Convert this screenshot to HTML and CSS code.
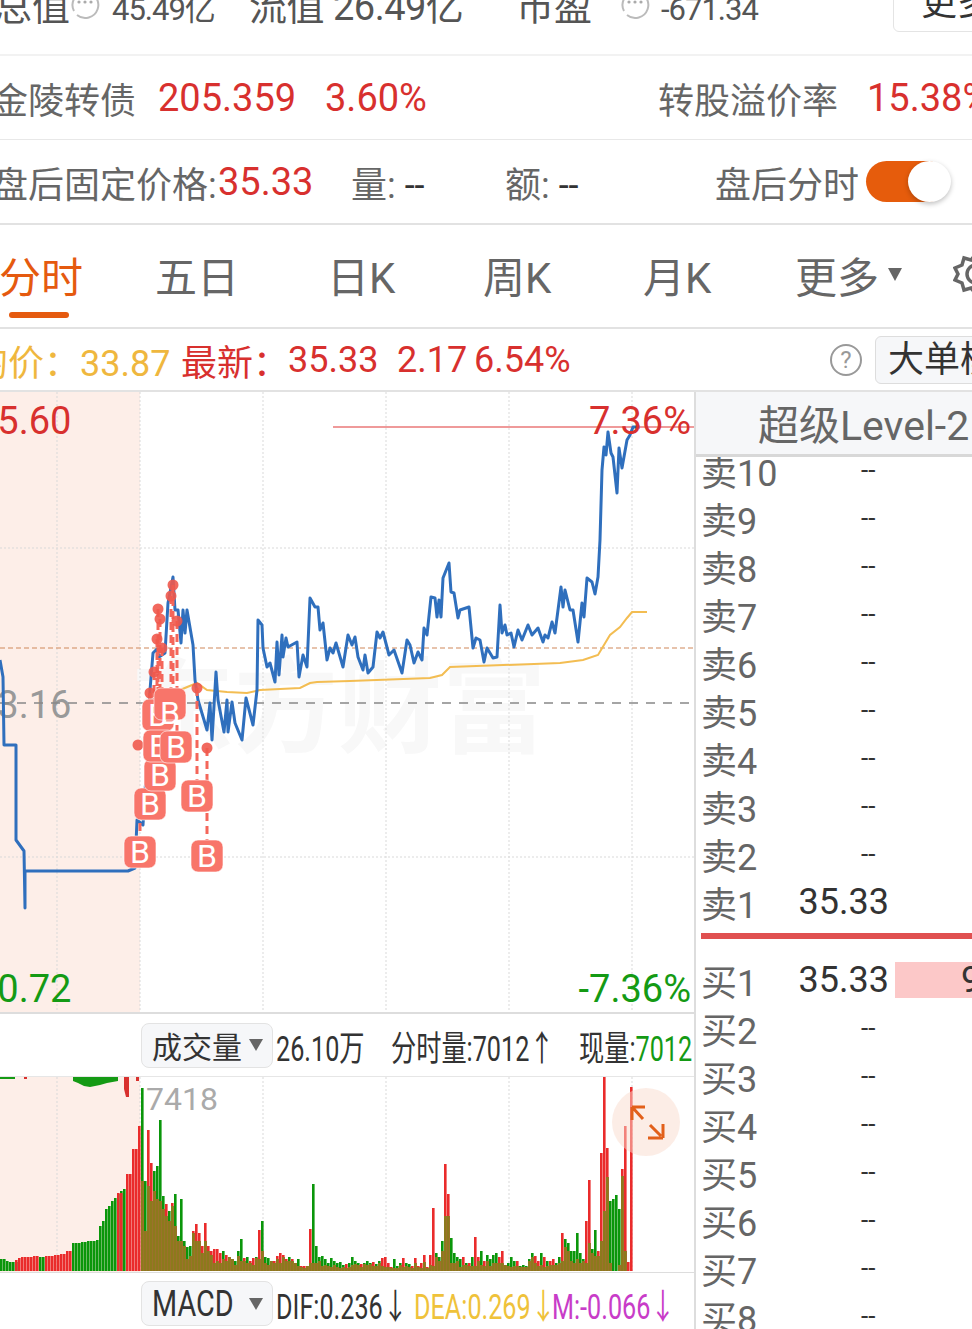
FILE: index.html
```html
<!DOCTYPE html>
<html lang="zh-CN">
  <head>
    <meta charset="UTF-8" />
    <meta name="viewport" content="width=device-width, initial-scale=1.0" />
    <title>金陵转债 分时</title>
    <link rel="stylesheet" href="styles.css">
  </head>
  <body>
    <div class="page">
      <div class="row top-row">
        <span>总值</span>
        <svg class="bubble" viewBox="0 0 30 30"><path d="M15 2a13 13 0 1 1-8 23" /><path d="M15 2A13 13 0 0 0 4 21" /><circle cx="9" cy="12" r="1.6" /><circle cx="15" cy="12" r="1.6" /><circle cx="21" cy="12" r="1.6" /></svg>
        <span class="small-val">45.49亿</span>
        <span class="big-val">流值 26.49亿</span>
        <span>市盈</span>
        <svg class="bubble" viewBox="0 0 30 30"><path d="M15 2a13 13 0 1 1-8 23" /><path d="M15 2A13 13 0 0 0 4 21" /><circle cx="9" cy="12" r="1.6" /><circle cx="15" cy="12" r="1.6" /><circle cx="21" cy="12" r="1.6" /></svg>
        <span class="small-val">-671.34</span>
        <div class="more-btn">更多</div>
      </div>

      <div class="row bond-row">
        <span>金陵转债</span>
        <span class="up num">205.359</span>
        <span class="up num">3.60%</span>
        <span>转股溢价率</span>
        <span class="up num">15.38%</span>
      </div>

      <div class="row after-row">
        <span>盘后固定价格:</span>
        <span class="up num">35.33</span>
        <span>量: <b class="dash">--</b></span>
        <span>额: <b class="dash">--</b></span>
        <span>盘后分时</span>
        <div class="toggle"><div class="knob"></div></div>
      </div>

      <div class="tabs">
        <span class="tab active">分时</span>
        <span class="tab">五日</span>
        <span class="tab">日K</span>
        <span class="tab">周K</span>
        <span class="tab">月K</span>
        <span class="tab">更多<i class="caret"></i></span>
        <svg class="gear" viewBox="0 0 46 46"><path d="M23 3l5 6 7-2 2 7 7 3-3 6 3 6-7 3-2 7-7-2-5 6-5-6-7 2-2-7-7-3 3-6-3-6 7-3 2-7 7 2z" /><circle cx="23" cy="23" r="9" /></svg>
      </div>

      <div class="row info-row">
        <span class="avg">均价：<b class="num">33.87</b></span>
        <span class="up">最新：</span>
        <span class="up num">35.33</span>
        <span class="up num">2.17</span>
        <span class="up num">6.54%</span>
        <span class="help">?</span>
        <div class="mode-btn">大单模式</div>
      </div>

      <div class="main">
        <div class="charts">
          <svg class="price-chart" viewBox="0 392 694 620">
            <rect class="pre-bg" x="0" y="392" width="140" height="620" />
            <text class="watermark" x="130" y="745">东方财富</text>
            <path class="grid" d="M57 392V1012M140 392V1012M263 392V1012M386 392V1012M509 392V1012M632 392V1012M0 548H694M0 857H694" />
            <path class="avg-line" d="M0 648H694" />
            <text class="axis up-fill" x="-24" y="434">35.60</text>
            <text class="axis grey-fill" x="-24" y="718">33.16</text>
            <text class="axis down-fill" x="-24" y="1002">30.72</text>
            <path class="mid-line" d="M0 703H694" />
            <path class="limit-line" d="M333 427H694" />
            <polyline class="yellow" points="180,690 197,683 207,690 227,692 247,693 260,690 300,688 310,683 317,682 350,681 430,678 442,675 450,667 560,663 583,660 598,655 610,635 620,627 627,618 632,612 647,612" />
            <polyline class="blue" points="0,660 3,677 4,745 16,745 16,840 24,851 25,908 25,871 32,871 128,871 135,868 137,820 143,825 145,790 148,760 150,690 153,653 157,649 159,657 165,653 168,603 173,577 175,610 178,610 181,643 183,610 185,633 187,610 193,645 195,680 198,700 207,730 210,703 212,740 216,672 218,700 224,732 227,700 228,732 232,702 235,723 242,740 246,698 253,725 257,690 258,620 262,625 263,648 267,667 270,663 275,682 277,642 279,675 282,635 283,657 286,638 288,647 297,642 299,677 303,655 307,667 310,598 315,607 318,607 320,630 323,623 327,660 330,648 333,653 336,643 343,667 348,635 352,645 355,637 358,657 363,670 365,655 368,673 373,667 377,632 380,638 383,632 389,655 394,650 402,673 407,640 410,645 414,663 418,652 422,660 424,628 427,635 431,597 435,598 437,617 439,600 441,617 443,578 449,563 451,592 454,593 458,618 460,610 469,607 473,648 476,638 480,640 484,662 487,648 493,658 497,657 500,605 502,633 505,625 507,635 511,633 514,647 518,630 522,640 528,625 532,635 538,628 543,642 545,635 548,638 552,622 555,633 561,587 563,607 565,590 570,610 573,610 578,642 582,603 584,617 587,578 592,582 595,594 598,577 600,540 602,470 604,447 606,455 608,432 611,453 613,457 617,493 619,448 622,468 627,440 630,435 633,427 640,427" />
            <path class="trade-stem" d="M173 585V700M171 596V700M158 609V715M160 619V715M177 621V747M157 639V747M162 648V775M154 672V804M150 693V804M197 688V796M207 748V856M140 810V852" />
            <g class="dots">
              <circle cx="173" cy="585" r="5.5" /><circle cx="171" cy="596" r="5.5" /><circle cx="158" cy="609" r="5.5" /><circle cx="160" cy="619" r="5.5" />
              <circle cx="177" cy="621" r="5.5" /><circle cx="157" cy="639" r="5.5" /><circle cx="162" cy="648" r="5.5" /><circle cx="154" cy="672" r="5.5" />
              <circle cx="150" cy="693" r="5.5" /><circle cx="197" cy="688" r="5.5" /><circle cx="207" cy="748" r="5.5" /><circle cx="138" cy="745" r="5.5" />
            </g>
            <g class="badge"><rect x="134" y="788" width="32" height="32" rx="7" /><text x="150" y="815">B</text></g>
            <g class="badge"><rect x="124" y="836" width="32" height="32" rx="7" /><text x="140" y="863">B</text></g>
            <g class="badge"><rect x="191" y="840" width="32" height="32" rx="7" /><text x="207" y="867">B</text></g>
            <g class="badge"><rect x="181" y="780" width="32" height="32" rx="7" /><text x="197" y="807">B</text></g>
            <g class="badge"><rect x="144" y="759" width="32" height="32" rx="7" /><text x="160" y="786">B</text></g>
            <g class="badge"><rect x="142" y="699" width="32" height="32" rx="7" /><text x="158" y="726">B</text></g>
            <g class="badge"><rect x="143" y="730" width="32" height="32" rx="7" /><text x="159" y="757">B</text></g>
            <g class="badge"><rect x="154" y="688" width="32" height="32" rx="7" /><text x="170" y="724">B</text></g>
            <g class="badge"><rect x="160" y="731" width="32" height="32" rx="7" /><text x="176" y="758">B</text></g>
            <text class="axis up-fill end" x="691" y="434">7.36%</text>
            <text class="axis down-fill end" x="691" y="1002">-7.36%</text>
          </svg>

          <div class="sub-bar">
            <div class="pick"><span>成交量</span><i></i></div>
            <span class="narrow w-total">26.10万</span>
            <span class="narrow w-fen">分时量:7012↑</span>
            <span class="narrow w-xian">现量:<b class="down">7012</b></span>
          </div>

          <div class="volume">
            <svg class="vol-chart" id="volChart" viewBox="0 0 694 195">
              <rect class="pre-bg" x="0" y="0" width="140" height="195" />
              <path class="grid" d="M57 0V195M140 0V195M263 0V195M386 0V195M509 0V195M632 0V195" />
              <path class="hang-green" d="M0 0H15V2H0zM73 0H118V4L107 6 100 8 90 10 84 9 78 6 73 4z" />
              <path class="hang-red" d="M24 0H27V2H24zM124 0H129V20H126L124 12zM136 0H139V4H136z" />
              <text class="peak" x="146" y="33">7418</text>
            </svg>
            <div class="expand">
              <svg viewBox="0 0 68 68"><path d="M20 19H33M20 19V32M21 20L31 31M51 50H36M51 50V36M49 48L38 37" /></svg>
            </div>
          </div>

          <div class="sub-bar macd-bar">
            <div class="pick"><span>MACD</span><i></i></div>
            <span class="narrow w-dif">DIF:0.236↓</span>
            <span class="narrow w-dea dea">DEA:0.269↓</span>
            <span class="narrow w-m macd-m">M:-0.066↓</span>
          </div>
        </div>

        <div class="book">
          <div class="book-head">超级Level-2</div>
          <div class="book-list">
            <div class="book-rows asks">
              <div class="level"><span>卖10</span><span class="price">--</span></div>
              <div class="level"><span>卖9</span><span class="price">--</span></div>
              <div class="level"><span>卖8</span><span class="price">--</span></div>
              <div class="level"><span>卖7</span><span class="price">--</span></div>
              <div class="level"><span>卖6</span><span class="price">--</span></div>
              <div class="level"><span>卖5</span><span class="price">--</span></div>
              <div class="level"><span>卖4</span><span class="price">--</span></div>
              <div class="level"><span>卖3</span><span class="price">--</span></div>
              <div class="level"><span>卖2</span><span class="price">--</span></div>
              <div class="level"><span>卖1</span><span class="price up">35.33</span></div>
            </div>
            <div class="book-sep"></div>
            <div class="book-rows">
              <div class="level"><span>买1</span><span class="price up">35.33</span><span class="qty">9</span></div>
              <div class="level"><span>买2</span><span class="price">--</span></div>
              <div class="level"><span>买3</span><span class="price">--</span></div>
              <div class="level"><span>买4</span><span class="price">--</span></div>
              <div class="level"><span>买5</span><span class="price">--</span></div>
              <div class="level"><span>买6</span><span class="price">--</span></div>
              <div class="level"><span>买7</span><span class="price">--</span></div>
              <div class="level"><span>买8</span><span class="price">--</span></div>
            </div>
          </div>
        </div>
      </div>
    </div>
    <script src="script.js"></script>
  </body>
</html>
```

FILE: styles.css
```css
* {
  box-sizing: border-box;
}

html,
body {
  margin: 0;
  background: #fff;
}

body {
  font-family: Roboto, "Noto Sans CJK SC", sans-serif;
  color: #666;
}

svg {
  display: block;
}

.page {
  width: 972px;
  height: 1329px;
  overflow: hidden;
}

.row {
  display: grid;
  align-items: center;
  white-space: nowrap;
  font-size: 36px;
  background: #fff;
}

.num {
  font-size: 38px;
  font-weight: 400;
}

.up {
  color: #d8302e;
}

.down {
  color: #149a14;
  font-weight: 400;
}

.top-row {
  position: relative;
  height: 56px;
  margin-left: -6px;
  grid-template-columns: 76px 42px 137px 267px 104px 41px 1fr;
  border-bottom: 2px solid #f2f2f2;
  align-items: start;
  color: #555;
}

.top-row > span {
  margin-top: -17px;
  line-height: 48px;
  font-size: 38px;
}

.top-row .small-val {
  margin-top: -9px;
  line-height: 38px;
  font-size: 31px;
  letter-spacing: -1px;
}

.top-row .big-val {
  letter-spacing: -0.5px;
}

.bubble {
  width: 30px;
  height: 30px;
  margin-top: -10px;
  fill: none;
  stroke: #bbb;
  stroke-width: 2;
}

.bubble circle {
  fill: #aaa;
  stroke: none;
}

.more-btn {
  position: absolute;
  left: 899px;
  top: -20px;
  width: 110px;
  height: 52px;
  padding-left: 27px;
  line-height: 44px;
  font-size: 36px;
  color: #333;
  background: #fff;
  border: 1px solid #e4e4e4;
  border-radius: 6px;
}

.bond-row {
  height: 84px;
  margin-left: -8px;
  grid-template-columns: 166px 167px 333px 209px 1fr;
  border-bottom: 1px solid #e8e8e8;
}

.after-row {
  height: 85px;
  margin-left: -8px;
  grid-template-columns: 226px 133px 154px 210px 151px 1fr;
  border-bottom: 2px solid #e2e2e2;
}

.dash {
  font-weight: 400;
  color: #333;
}

.toggle {
  position: relative;
  width: 82px;
  height: 41px;
  background: #e65c0c;
  border-radius: 21px;
}

.knob {
  position: absolute;
  right: -3px;
  top: 0;
  width: 43px;
  height: 41px;
  background: #fff;
  border-radius: 50%;
  box-shadow: 0 2px 5px rgba(0, 0, 0, 0.25);
}

.tabs {
  display: grid;
  grid-template-columns: 156px 172px 156px 160px 152px 158px 1fr;
  align-items: center;
  height: 104px;
  margin-left: -1px;
  padding-bottom: 4px;
  border-bottom: 2px solid #e2e2e2;
}

.tab {
  position: relative;
  font-size: 42px;
  white-space: nowrap;
}

.tab.active {
  color: #e55a0f;
}

.tab.active::after {
  content: "";
  position: absolute;
  left: 10px;
  bottom: -13px;
  width: 60px;
  height: 6px;
  background: #e55a0f;
  border-radius: 3px;
}

.caret {
  display: inline-block;
  margin-left: 9px;
  vertical-align: 12px;
  border-left: 7px solid transparent;
  border-right: 7px solid transparent;
  border-top: 13px solid #666;
}

.gear {
  width: 46px;
  height: 46px;
  fill: none;
  stroke: #666;
  stroke-width: 3.5;
}

.info-row {
  height: 63px;
  margin-left: -28px;
  grid-template-columns: 209px 107px 109px 77px 356px 45px 1fr;
  border-bottom: 2px solid #e2e2e2;
}

.avg {
  color: #efb73e;
}

.avg .num {
  font-size: 36px;
}

.info-row .num {
  font-size: 36px;
}

.help {
  width: 32px;
  height: 32px;
  margin-left: 0;
  border: 2px solid #999;
  border-radius: 50%;
  color: #999;
  font-size: 24px;
  line-height: 28px;
  text-align: center;
}

.mode-btn {
  width: 140px;
  height: 48px;
  padding-left: 12px;
  line-height: 46px;
  color: #333;
  background: #f6f7f9;
  border: 1px solid #ddd;
  border-radius: 6px;
}

.main {
  display: flex;
  height: 938px;
}

.charts {
  flex: 0 0 694px;
  width: 694px;
}

.price-chart {
  width: 694px;
  height: 620px;
}

.vol-chart {
  width: 694px;
  height: 195px;
}

.pre-bg {
  fill: #fdeee8;
}

.grid {
  fill: none;
  stroke: #d9d9d9;
  stroke-width: 1;
  stroke-dasharray: 2 2;
}

.avg-line {
  fill: none;
  stroke: #d0875a;
  stroke-width: 1.2;
  stroke-dasharray: 5 3;
}

.mid-line {
  fill: none;
  stroke: #888;
  stroke-width: 1.5;
  stroke-dasharray: 9 8;
}

.limit-line {
  fill: none;
  stroke: #ef9a9a;
  stroke-width: 2;
}

.yellow {
  fill: none;
  stroke: #f3bd52;
  stroke-width: 2;
}

.blue {
  fill: none;
  stroke: #2f6fbd;
  stroke-width: 3;
  stroke-linejoin: round;
}

.trade-stem {
  fill: none;
  stroke: #f4665a;
  stroke-width: 3;
  stroke-dasharray: 8 5;
}

.dots circle {
  fill: #f0594c;
  fill-opacity: 0.9;
}

.badge rect {
  fill: #f8756a;
  stroke: #fff;
  stroke-opacity: 0.6;
  stroke-width: 1;
}

.badge text {
  fill: #fff;
  font-size: 32px;
  text-anchor: middle;
}

.watermark {
  fill: #f8f8f8;
  font-size: 104px;
  font-weight: 700;
}

.axis {
  font-size: 38px;
}

.axis.end {
  text-anchor: end;
}

.up-fill {
  fill: #d8302e;
}

.down-fill {
  fill: #149a14;
}

.grey-fill {
  fill: #999;
}

.sub-bar {
  position: relative;
  display: flex;
  align-items: center;
  height: 65px;
  padding-left: 141px;
  border-top: 2px solid #ddd;
  border-bottom: 1px solid #e6e6e6;
  background: #fff;
  color: #333;
}

.macd-bar {
  height: 58px;
  padding-top: 4px;
  border-bottom: none;
  border-top: 1px solid #ddd;
}

.pick {
  display: flex;
  align-items: center;
  flex: 0 0 132px;
  height: 45px;
  padding-left: 10px;
  font-size: 30px;
  color: #333;
  background: #f6f7f9;
  border: 1px solid #e3e3e3;
  border-radius: 8px;
}

.pick span {
  display: inline-block;
  width: 96px;
  white-space: nowrap;
}

.pick i {
  margin-left: 1px;
  border-left: 7px solid transparent;
  border-right: 7px solid transparent;
  border-top: 12px solid #666;
}

.macd-bar .pick span {
  transform: scaleX(0.8);
  transform-origin: left center;
  font-size: 36px;
}

.narrow {
  display: inline-block;
  flex: none;
  font-size: 35px;
  white-space: nowrap;
  transform: scaleX(0.72);
  transform-origin: left center;
}

.narrow b {
  font-weight: 400;
}

.w-total {
  width: 115px;
  margin-left: 3px;
}

.w-fen {
  width: 188px;
}

.w-xian {
  width: 140px;
}

.w-dif {
  width: 138px;
  margin-left: 3px;
}

.w-dea {
  width: 138px;
}

.w-m {
  width: 130px;
}

.dea {
  color: #efc23a;
}

.macd-m {
  color: #c83cc8;
}

.volume {
  position: relative;
  height: 195px;
}

.hang-green {
  fill: #149a14;
}

.hang-red {
  fill: #d8302e;
}

.peak {
  fill: #aaa;
  font-size: 32px;
}

.expand {
  position: absolute;
  left: 612px;
  top: 11px;
  width: 68px;
  height: 68px;
  background: rgba(250, 220, 205, 0.5);
  border-radius: 50%;
}

.expand svg {
  fill: none;
  stroke: #e2601a;
  stroke-width: 3;
}

.book {
  flex: 1;
  min-width: 0;
  border-left: 2px solid #ddd;
  overflow: hidden;
}

.book-head {
  height: 65px;
  padding-left: 62px;
  line-height: 68px;
  font-size: 41px;
  white-space: nowrap;
  background: #f6f7f9;
  border-bottom: 3px solid #d8d8d8;
}

.book-list {
  height: 873px;
  padding-left: 5px;
  overflow: hidden;
}

.book-rows {
  display: flex;
  flex-direction: column;
}

.asks {
  margin-top: -13px;
}

.level {
  position: relative;
  display: grid;
  grid-template-columns: 96px 92px 1fr;
  align-items: center;
  height: 48px;
  font-size: 36px;
  white-space: nowrap;
}

.price {
  color: #333;
  text-align: right;
}

.level .price:not(.up) {
  width: 92px;
  text-align: left;
  padding-left: 64px;
  font-size: 26px;
}

.qty {
  height: 36px;
  margin-left: 6px;
  padding-left: 66px;
  line-height: 36px;
  color: #333;
  background: #fcc8c8;
}

.book-sep {
  height: 6px;
  margin: 9px -5px 15px 0;
  background: #e05050;
}
```

FILE: script.js
```js
// volume bars, one entry per 3px starting at x=1 (pre-market) and x=142 (trading)
const preGreen = [12,12,10,9,9,9,0,0,0,0,0,0,0,14,14,0,0,0,0,0,0,0,0,0,28,28,28,29,29,30,30,30,31,45,50,62,65,70,73,77,80,82,0,0,0,0,0];
const preRed = [0,0,0,0,0,11,13,14,14,14,14,15,15,0,0,15,15,15,16,16,17,17,20,20,0,0,0,0,0,0,0,0,0,0,0,0,0,0,0,78,78,0,97,97,122,122,145];

const green = [183,90,85,70,100,105,151,75,55,60,65,77,35,72,30,24,25,38,30,30,18,30,20,16,8,10,8,20,10,14,12,10,20,32,10,14,8,6,14,12,50,14,13,10,8,12,8,14,10,14,10,8,12,4,3,5,8,87,25,14,15,12,8,13,10,8,9,6,3,8,
  14,10,8,4,8,10,8,5,7,10,5,4,4,3,12,5,8,4,8,7,3,8,4,3,9,3,6,5,18,14,30,55,55,33,18,14,12,6,8,5,14,5,10,20,5,16,12,16,18,8,8,6,8,14,10,5,5,6,5,12,18,8,5,18,4,10,6,6,8,14,10,32,28,20,20,38,18,12,8,28,22,41,15,30,60,94,70,72,76,62,95,20,0,0];
const red = [90,40,141,108,80,72,70,62,67,50,68,45,30,30,25,12,15,40,47,38,25,48,25,20,22,22,18,12,16,14,12,6,15,10,13,8,10,13,13,41,20,8,6,10,10,15,18,16,12,10,12,8,5,5,5,5,42,8,8,10,5,6,5,4,6,4,3,4,7,4,
  6,7,6,7,7,6,7,9,5,8,13,14,8,4,3,3,6,13,5,4,5,13,5,8,16,4,16,63,14,10,20,107,77,8,8,10,4,14,6,8,5,34,14,6,10,10,5,8,8,14,20,6,5,4,5,10,4,4,4,10,14,15,10,6,14,5,10,12,6,8,38,24,20,10,8,12,8,10,50,91,18,15,20,118,194,123,8,0,0,6,102,145,9,184];

const svgNS = "http://www.w3.org/2000/svg";
const chart = document.getElementById("volChart");
const peak = chart.querySelector(".peak");
const baseY = 194;

function addBar(x, h, color) {
  if (!h) return;
  const bar = document.createElementNS(svgNS, "rect");
  bar.setAttribute("x", x);
  bar.setAttribute("y", baseY - h);
  bar.setAttribute("width", 2.6);
  bar.setAttribute("height", h);
  bar.setAttribute("fill", color);
  chart.insertBefore(bar, peak);
}

function drawBars(g, r, startX) {
  g.forEach((gh, i) => {
    const rh = r[i] || 0;
    const x = startX + i * 3;
    addBar(x, gh, "#0a960a");
    addBar(x, rh, "#ea2b2b");
    // overlap of both series reads as olive
    if (startX > 100) addBar(x, Math.min(gh, rh), "#8c7a1c");
  });
}

drawBars(preGreen, preRed, 0);
drawBars(green, red, 141);
```
